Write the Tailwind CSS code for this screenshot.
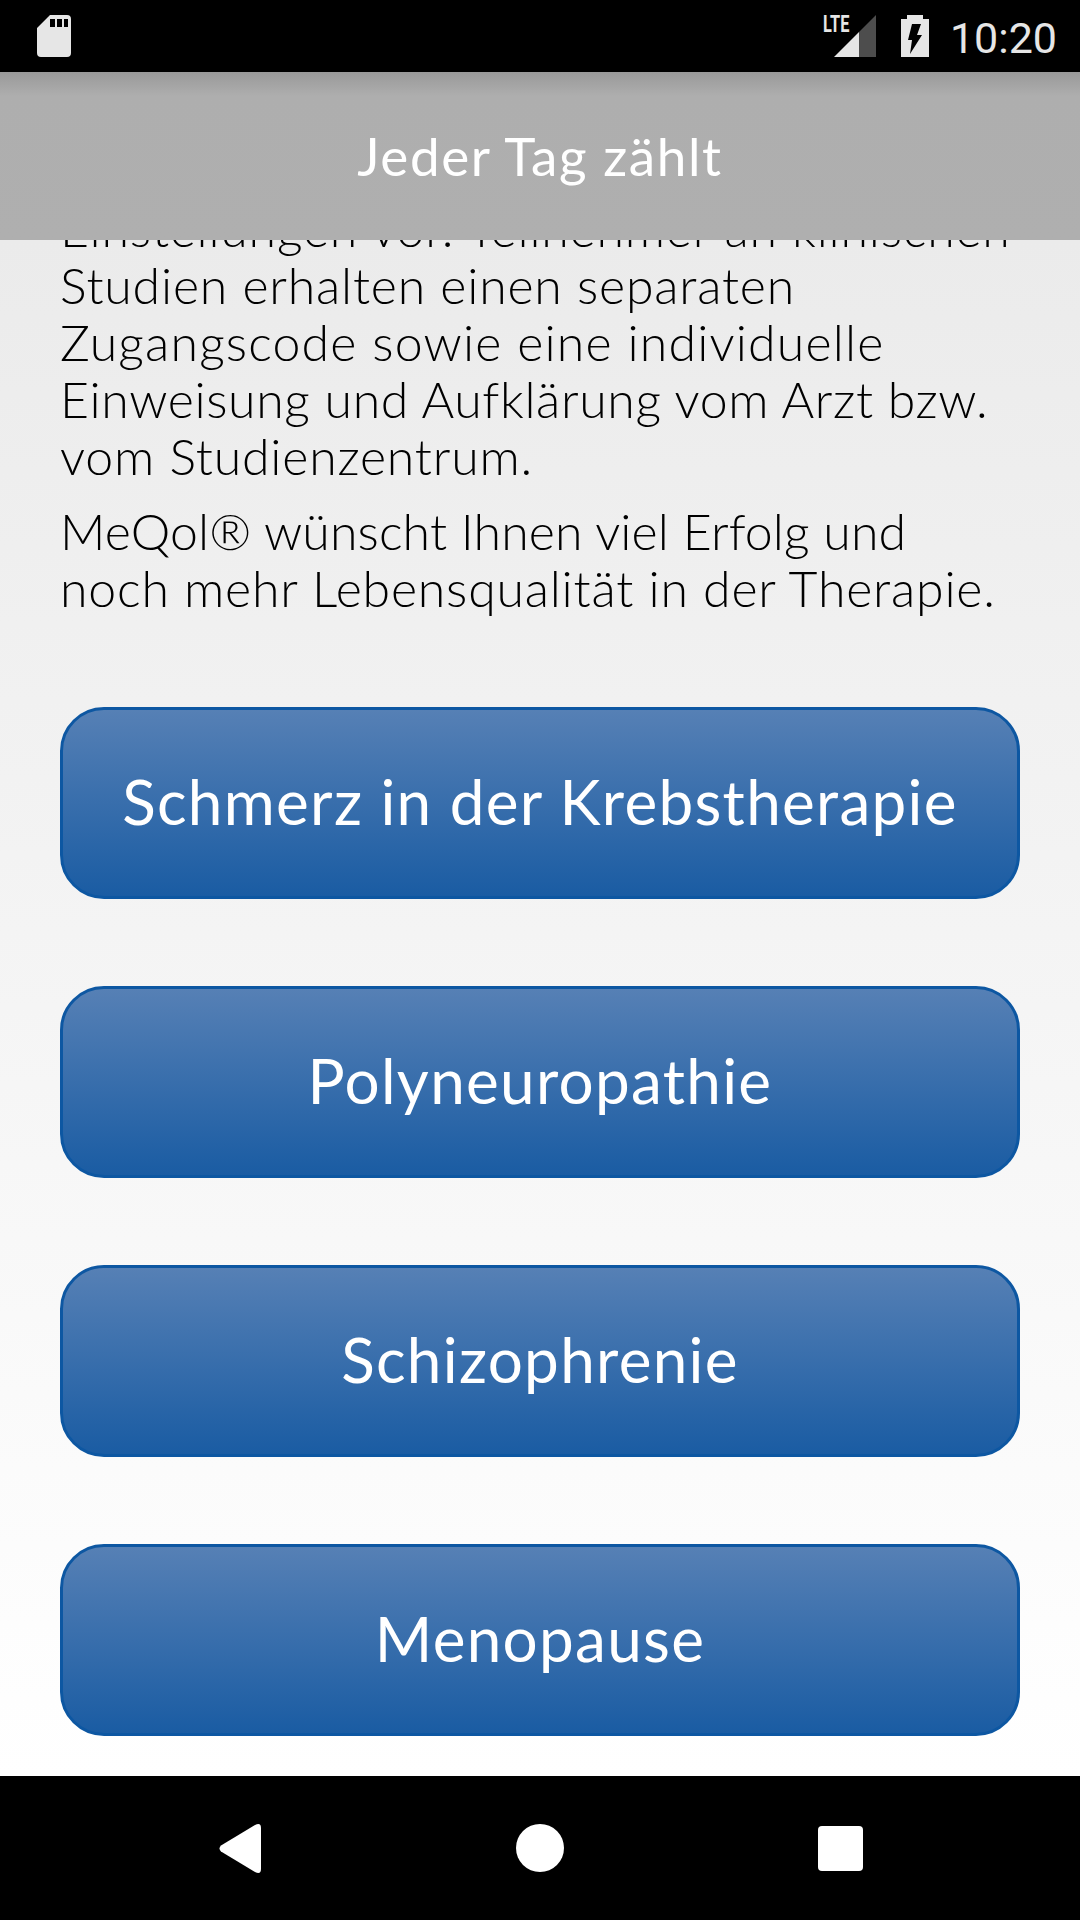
<!DOCTYPE html>
<html lang="de">
  <head>
    <meta charset="utf-8">
    <meta name="viewport" content="width=device-width, initial-scale=1">
    <title>Jeder Tag zählt</title>
    <script src="https://cdn.jsdelivr.net/npm/@tailwindcss/browser@4"></script>
  </head>
  <body class="bg-black">
    <div class="w-[1080px] h-[1920px] flex flex-col overflow-hidden font-['Lato',sans-serif]">
      <!-- status bar -->
      <div class="h-[72px] shrink-0 bg-black flex items-center justify-between pl-[37px] pr-[23px]">
        <svg width="34" height="42" viewBox="0 0 34 42">
          <path fill="#e6e6e6" fill-rule="evenodd" d="M13 0H30a4 4 0 0 1 4 4V38a4 4 0 0 1-4 4H4a4 4 0 0 1-4-4V13Z M13 4v8h5V4Z M20 4v8h5V4Z M27 4v8h4V4Z"/>
        </svg>
        <div class="flex items-center">
          <div class="relative w-[54px] h-[42px] mr-[25px]">
            <span class="absolute left-[1px] top-[-3px] text-[24px] leading-[24px] font-bold text-[#e6e6e6] font-['Roboto',sans-serif] origin-left scale-x-[0.68]">LTE</span>
            <svg width="54" height="42" viewBox="0 0 54 42" class="absolute left-0 top-0">
              <path fill="#4d4d4d" d="M54 0V42H37V17Z"/>
              <path fill="#e6e6e6" d="M12 42L37 17V42Z"/>
            </svg>
          </div>
          <svg width="28" height="42" viewBox="0 0 28 42" class="mr-[21px]">
            <path fill="#e6e6e6" fill-rule="evenodd" d="M6 0H22V4H28V42H0V4H6Z M11 9H20L16 20H21L9 39L11 25H7Z"/>
          </svg>
          <span class="mt-[4px] text-[43px] leading-[50px] text-[#e6e6e6] font-['Roboto',sans-serif]">10:20</span>
        </div>
      </div>

      <!-- header -->
      <div class="h-[168px] shrink-0 bg-[linear-gradient(#999999_0px,#aeaeae_24px,#afafaf_100%)] flex items-center justify-center z-10">
        <h1 class="text-[53px] tracking-[1.6px] text-white font-normal">Jeder Tag zählt</h1>
      </div>

      <!-- scrolled content -->
      <main class="flex-1 overflow-hidden bg-[linear-gradient(#ebebeb,#ffffff)] px-[60px]">
        <div class="mt-[-40px] text-[50px] leading-[57px] tracking-[0.8px] font-light text-black whitespace-nowrap">
          <p>
            Einstellungen vor. Teilnehmer an klinischen<br>
            Studien erhalten einen separaten<br>
            <span class="tracking-[1.18px]">Zugangscode sowie eine individuelle</span><br>
            <span class="tracking-[0.62px]">Einweisung und Aufklärung vom Arzt bzw.</span><br>
            vom Studienzentrum.
          </p>
          <p class="mt-[18px]">
            <span class="tracking-[0.12px]">MeQol® wünscht Ihnen viel Erfolg und</span><br>
            noch mehr Lebensqualität in der Therapie.
          </p>
        </div>
        <div class="mt-[90px] flex flex-col gap-[87px]">
          <button type="button" class="h-[192px] pb-[4px] rounded-[44px] border-[3px] border-[#0d57a2] bg-[linear-gradient(#5680b5,#1a5ca3)] text-white text-[62px] tracking-[1.3px]">Schmerz in der Krebstherapie</button>
          <button type="button" class="h-[192px] pb-[4px] rounded-[44px] border-[3px] border-[#0d57a2] bg-[linear-gradient(#5680b5,#1a5ca3)] text-white text-[62px] tracking-[1.3px]">Polyneuropathie</button>
          <button type="button" class="h-[192px] pb-[4px] rounded-[44px] border-[3px] border-[#0d57a2] bg-[linear-gradient(#5680b5,#1a5ca3)] text-white text-[62px] tracking-[1.3px]">Schizophrenie</button>
          <button type="button" class="h-[192px] pb-[4px] rounded-[44px] border-[3px] border-[#0d57a2] bg-[linear-gradient(#5680b5,#1a5ca3)] text-white text-[62px] tracking-[1.3px]">Menopause</button>
        </div>
      </main>

      <!-- nav bar -->
      <div class="h-[144px] shrink-0 bg-black flex items-center justify-center">
        <div class="w-[300px] flex justify-center">
          <svg width="42" height="49" viewBox="0 0 42 49"><path fill="#fff" d="M2 21.5L36 1Q42 -2 42 4V45Q42 51 36 48L2 27.5Q-1 24.5 2 21.5Z"/></svg>
        </div>
        <div class="w-[300px] flex justify-center">
          <div class="w-[48px] h-[48px] rounded-full bg-white"></div>
        </div>
        <div class="w-[300px] flex justify-center">
          <div class="w-[45px] h-[45px] rounded-[4px] bg-white"></div>
        </div>
      </div>
    </div>
  </body>
</html>
